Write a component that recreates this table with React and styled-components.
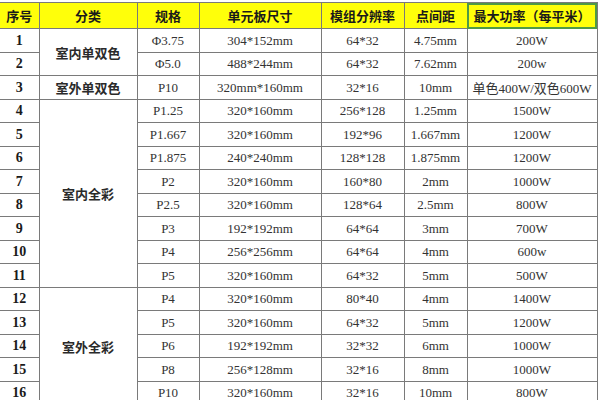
import React from "react";
import styled, { createGlobalStyle } from "styled-components";

const GlobalStyle = createGlobalStyle`
  body {
    margin: 0;
    background: #ffffff;
  }
`;

const columns = [39, 98, 62, 122, 83, 63, 130];

const headers = ["序号", "分类", "规格", "单元板尺寸", "模组分辨率", "点间距", "最大功率（每平米）"];

const groups = {
  1: { span: 2, name: "室内单双色" },
  3: { span: 1, name: "室外单双色" },
  4: { span: 8, name: "室内全彩" },
  12: { span: 5, name: "室外全彩" },
};

const rows = [
  { n: 1, spec: "Φ3.75", size: "304*152mm", res: "64*32", pitch: "4.75mm", power: "200W" },
  { n: 2, spec: "Φ5.0", size: "488*244mm", res: "64*32", pitch: "7.62mm", power: "200w" },
  { n: 3, spec: "P10", size: "320mm*160mm", res: "32*16", pitch: "10mm", power: "单色400W/双色600W" },
  { n: 4, spec: "P1.25", size: "320*160mm", res: "256*128", pitch: "1.25mm", power: "1500W" },
  { n: 5, spec: "P1.667", size: "320*160mm", res: "192*96", pitch: "1.667mm", power: "1200W" },
  { n: 6, spec: "P1.875", size: "240*240mm", res: "128*128", pitch: "1.875mm", power: "1200W" },
  { n: 7, spec: "P2", size: "320*160mm", res: "160*80", pitch: "2mm", power: "1000W" },
  { n: 8, spec: "P2.5", size: "320*160mm", res: "128*64", pitch: "2.5mm", power: "800W" },
  { n: 9, spec: "P3", size: "192*192mm", res: "64*64", pitch: "3mm", power: "700W" },
  { n: 10, spec: "P4", size: "256*256mm", res: "64*64", pitch: "4mm", power: "600w" },
  { n: 11, spec: "P5", size: "320*160mm", res: "64*32", pitch: "5mm", power: "500W" },
  { n: 12, spec: "P4", size: "320*160mm", res: "80*40", pitch: "4mm", power: "1400W" },
  { n: 13, spec: "P5", size: "320*160mm", res: "64*32", pitch: "5mm", power: "1200W" },
  { n: 14, spec: "P6", size: "192*192mm", res: "32*32", pitch: "6mm", power: "1000W" },
  { n: 15, spec: "P8", size: "256*128mm", res: "32*16", pitch: "8mm", power: "1000W" },
  { n: 16, spec: "P10", size: "320*160mm", res: "32*16", pitch: "10mm", power: "800W" },
];

const Sheet = styled.div`
  padding-top: 2px;
  width: 597px;
`;

const Table = styled.table`
  width: 597px;
  border-collapse: collapse;
  table-layout: fixed;
  font-family: "Liberation Serif", "Noto Sans CJK SC", serif;
  font-size: 13px;
  color: #333333;
`;

const Col = styled.col`
  width: ${(p) => p.$w}px;
`;

const HeadRow = styled.tr`
  height: 26px;
  background: #ffff0a;
`;

const HeadCell = styled.th`
  border: 1px solid #7a7a7a;
  border-left: ${(p) => (p.$first ? "none" : "1px solid #7a7a7a")};
  padding: 0;
  font-family: "Noto Sans CJK SC", sans-serif;
  font-weight: 700;
  font-size: 13px;
  color: #1a1a1a;
  text-align: center;
  vertical-align: middle;
  white-space: nowrap;
  outline: ${(p) => (p.$selected ? "2px solid #4f9a45" : "none")};
  outline-offset: -2px;
`;

const Row = styled.tr`
  height: ${(p) => (p.$tall ? 24 : 23)}px;
`;

const Cell = styled.td`
  border: 1px solid #7a7a7a;
  padding: 0;
  text-align: center;
  vertical-align: middle;
  white-space: nowrap;
`;

const NumCell = styled(Cell)`
  border-left: none;
  font-weight: 700;
  font-size: 14px;
  color: #1a1a1a;
`;

const GroupCell = styled(Cell)`
  font-family: "Noto Sans CJK SC", sans-serif;
  font-weight: 700;
  font-size: 13px;
  color: #2a2a2a;
`;

const PowerCell = styled(Cell)`
  border-right: 1px solid #7a7a7a;
`;

export default function App() {
  return (
    <Sheet>
      <GlobalStyle />
      <Table>
        <colgroup>
          {columns.map((w, i) => (
            <Col key={i} $w={w} />
          ))}
        </colgroup>
        <thead>
          <HeadRow>
            {headers.map((h, i) => (
              <HeadCell key={h} $first={i === 0} $selected={i === headers.length - 1}>
                {h}
              </HeadCell>
            ))}
          </HeadRow>
        </thead>
        <tbody>
          {rows.map((r, i) => (
            <Row key={r.n} $tall={i % 2 === 0}>
              <NumCell>{r.n}</NumCell>
              {groups[r.n] && <GroupCell rowSpan={groups[r.n].span}>{groups[r.n].name}</GroupCell>}
              <Cell>{r.spec}</Cell>
              <Cell>{r.size}</Cell>
              <Cell>{r.res}</Cell>
              <Cell>{r.pitch}</Cell>
              <PowerCell>{r.power}</PowerCell>
            </Row>
          ))}
        </tbody>
      </Table>
    </Sheet>
  );
}
